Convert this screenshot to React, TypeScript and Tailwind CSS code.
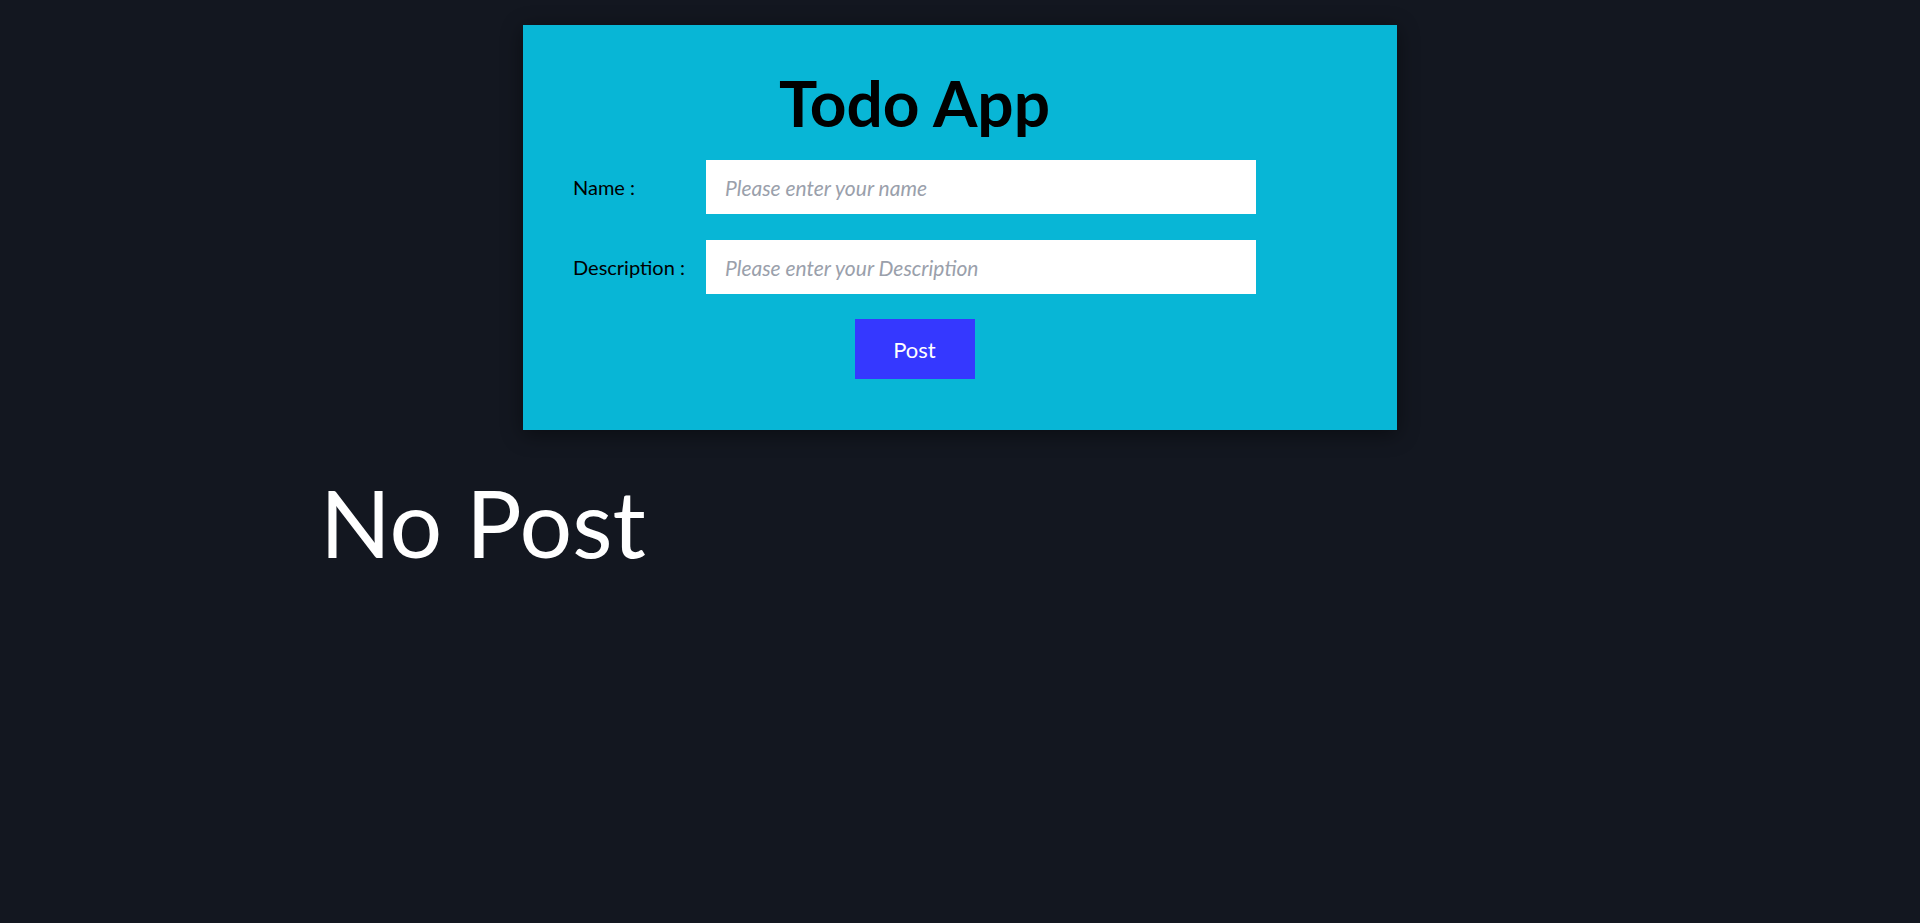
import React from "react";

export default function App() {
  return (
    <div className="min-h-screen w-full bg-[#131720] pt-[25px] font-['Lato','Noto_Sans',sans-serif]">
      <div className="mx-auto w-[874px] bg-[#08b6d6] pl-[50px] pt-[46px] pb-[51px] shadow-[0_4px_20px_rgba(0,0,0,0.45)]">
        <div className="w-[683px]">
          <h1 className="text-center text-[64px] font-bold leading-none text-black">Todo App</h1>
          <div className="mt-[25px] flex items-center">
            <label className="w-[133px] text-[20px] text-black">Name :</label>
            <input
              className="h-[54px] w-[550px] bg-white px-[19px] text-[21px] text-black outline-none placeholder:italic placeholder:text-[#9aa0ab]"
              placeholder="Please enter your name"
            />
          </div>
          <div className="mt-[26px] flex items-center">
            <label className="w-[133px] text-[20px] text-black">Description :</label>
            <input
              className="h-[54px] w-[550px] bg-white px-[19px] text-[21px] text-black outline-none placeholder:italic placeholder:text-[#9aa0ab]"
              placeholder="Please enter your Description"
            />
          </div>
          <div className="mt-[25px] flex justify-center">
            <button className="h-[60px] w-[120px] bg-[#3538ff] text-[22px] text-white">Post</button>
          </div>
        </div>
      </div>
      <div className="mt-[37px] pl-[320px]">
        <h2 className="text-[93px] leading-[1.2] text-white">No Post</h2>
      </div>
    </div>
  );
}
